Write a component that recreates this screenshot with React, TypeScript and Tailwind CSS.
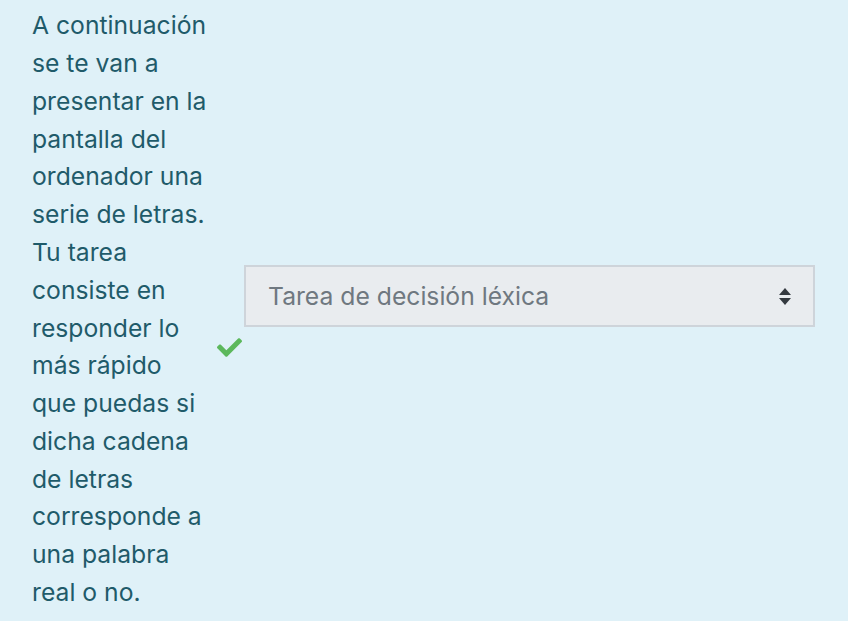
const lines = [
  "A continuación",
  "se te van a",
  "presentar en la",
  "pantalla del",
  "ordenador una",
  "serie de letras.",
  "Tu tarea",
  "consiste en",
  "responder lo",
  "más rápido",
  "que puedas si",
  "dicha cadena",
  "de letras",
  "corresponde a",
  "una palabra",
  "real o no.",
];

function CheckIcon() {
  return (
    <svg viewBox="0 64 512 384" className="w-[25px] h-[19px]" fill="#5cb85c">
      <path d="M173.9 439.4l-166.4-166.4c-10-10-10-26.2 0-36.2l36.2-36.2c10-10 26.2-10 36.2 0L192 312.7 432.1 72.6c10-10 26.2-10 36.2 0l36.2 36.2c10 10 10 26.2 0 36.2l-294.4 294.4c-10 10-26.2 10-36.2 0z" />
    </svg>
  );
}

function SortIcon() {
  return (
    <svg viewBox="0 0 12 18" className="w-[12px] h-[18px]" fill="#343a40">
      <path d="M6 0 L12 7 H0 Z" />
      <path d="M0 10 H12 L6 17 Z" />
    </svg>
  );
}

export default function App() {
  return (
    <div
      className="w-[848px] h-[621px] bg-[#dff1f8] text-[#1f5b6a] overflow-hidden"
      style={{ fontFamily: "Inter, 'Noto Sans', sans-serif" }}
    >
      <div className="flex items-center h-full pl-[32px]">
        {/* Question text */}
        <div className="w-[212px] text-[24.7px] leading-[37.8px] -mt-[2px]">
          {lines.map((l) => (
            <div key={l}>{l}</div>
          ))}
        </div>

        {/* Answer */}
        <div className="flex flex-col">
          <div className="w-[571px] h-[62px] flex items-center justify-between pl-[22px] pr-[22px] pt-[3px] bg-[#e9ecef] border-2 border-[#ced4da] text-[#6f7880] text-[24.7px]">
            <span>Tarea de decisión léxica</span>
            <SortIcon />
          </div>
          <div className="-ml-[27px] mt-[11px]">
            <CheckIcon />
          </div>
        </div>
      </div>
    </div>
  );
}
